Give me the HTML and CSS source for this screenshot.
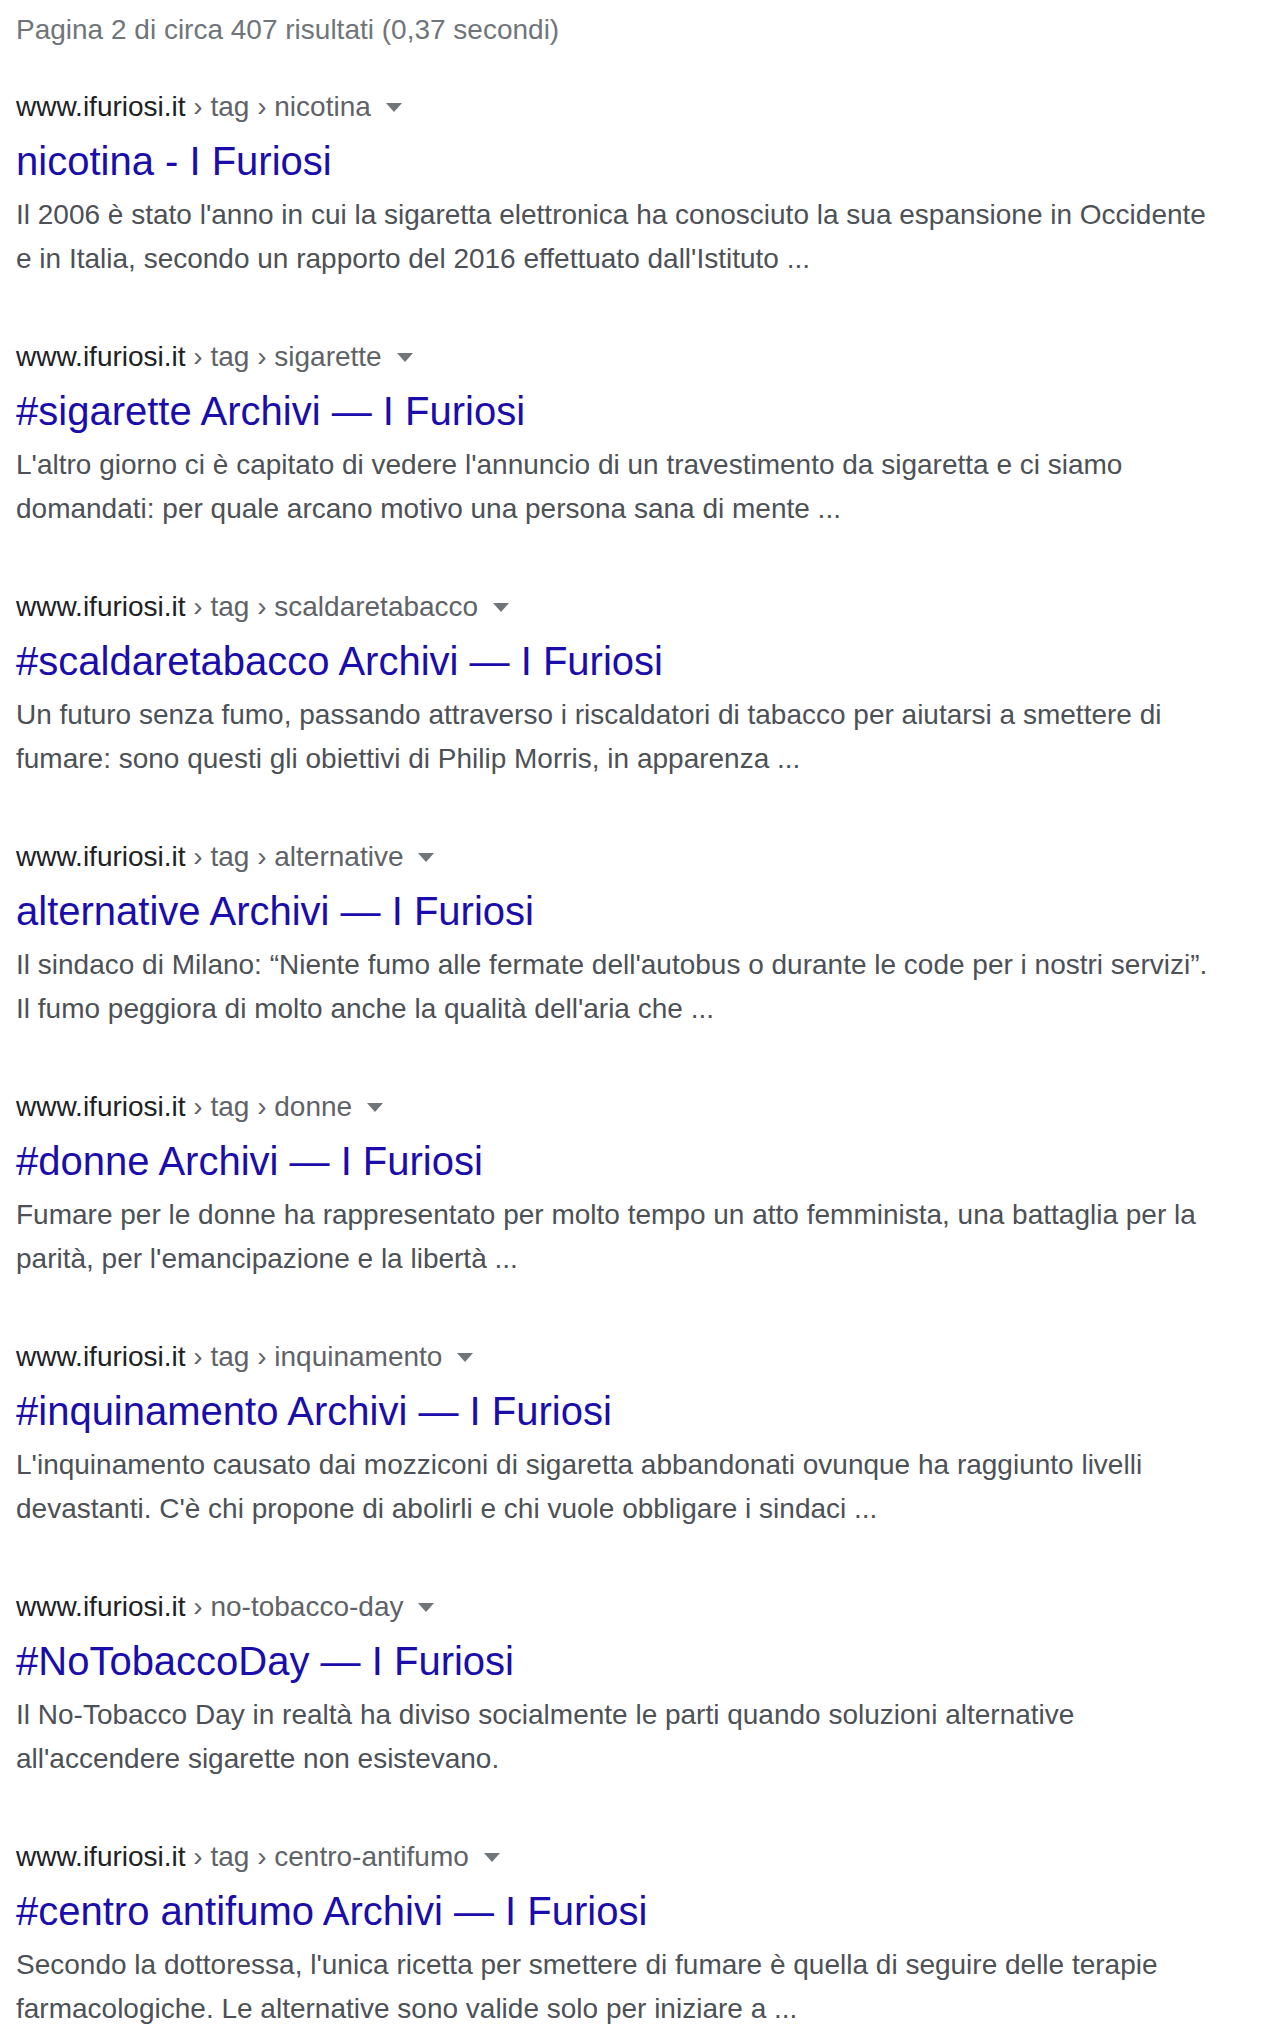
FILE: index.html
```html
<!DOCTYPE html>
<html lang="it">
<head>
<meta charset="utf-8">
<title>Risultati</title>
<link rel="stylesheet" href="styles.css">
</head>
<body>
<div class="page">
  <div class="stats">Pagina 2 di circa 407 risultati (0,37 secondi)</div>

  <div class="result">
    <div class="url"><span class="host">www.ifuriosi.it</span><span class="crumbs"> › tag › nicotina</span><span class="arrow"></span></div>
    <a class="title" href="#">nicotina - I Furiosi</a>
    <div class="snippet">Il 2006 è stato l'anno in cui la sigaretta elettronica ha conosciuto la sua espansione in Occidente e in Italia, secondo un rapporto del 2016 effettuato dall'Istituto ...</div>
  </div>

  <div class="result">
    <div class="url"><span class="host">www.ifuriosi.it</span><span class="crumbs"> › tag › sigarette</span><span class="arrow"></span></div>
    <a class="title" href="#">#sigarette Archivi — I Furiosi</a>
    <div class="snippet">L'altro giorno ci è capitato di vedere l'annuncio di un travestimento da sigaretta e ci siamo domandati: per quale arcano motivo una persona sana di mente ...</div>
  </div>

  <div class="result">
    <div class="url"><span class="host">www.ifuriosi.it</span><span class="crumbs"> › tag › scaldaretabacco</span><span class="arrow"></span></div>
    <a class="title" href="#">#scaldaretabacco Archivi — I Furiosi</a>
    <div class="snippet">Un futuro senza fumo, passando attraverso i riscaldatori di tabacco per aiutarsi a smettere di fumare: sono questi gli obiettivi di Philip Morris, in apparenza ...</div>
  </div>

  <div class="result">
    <div class="url"><span class="host">www.ifuriosi.it</span><span class="crumbs"> › tag › alternative</span><span class="arrow"></span></div>
    <a class="title" href="#">alternative Archivi — I Furiosi</a>
    <div class="snippet">Il sindaco di Milano: “Niente fumo alle fermate dell'autobus o durante le code per i nostri servizi”. Il fumo peggiora di molto anche la qualità dell'aria che ...</div>
  </div>

  <div class="result">
    <div class="url"><span class="host">www.ifuriosi.it</span><span class="crumbs"> › tag › donne</span><span class="arrow"></span></div>
    <a class="title" href="#">#donne Archivi — I Furiosi</a>
    <div class="snippet">Fumare per le donne ha rappresentato per molto tempo un atto femminista, una battaglia per la parità, per l'emancipazione e la libertà ...</div>
  </div>

  <div class="result">
    <div class="url"><span class="host">www.ifuriosi.it</span><span class="crumbs"> › tag › inquinamento</span><span class="arrow"></span></div>
    <a class="title" href="#">#inquinamento Archivi — I Furiosi</a>
    <div class="snippet">L'inquinamento causato dai mozziconi di sigaretta abbandonati ovunque ha raggiunto livelli devastanti. C'è chi propone di abolirli e chi vuole obbligare i sindaci ...</div>
  </div>

  <div class="result">
    <div class="url"><span class="host">www.ifuriosi.it</span><span class="crumbs"> › no-tobacco-day</span><span class="arrow"></span></div>
    <a class="title" href="#">#NoTobaccoDay — I Furiosi</a>
    <div class="snippet">Il No-Tobacco Day in realtà ha diviso socialmente le parti quando soluzioni alternative all'accendere sigarette non esistevano.</div>
  </div>

  <div class="result">
    <div class="url"><span class="host">www.ifuriosi.it</span><span class="crumbs"> › tag › centro-antifumo</span><span class="arrow"></span></div>
    <a class="title" href="#">#centro antifumo Archivi — I Furiosi</a>
    <div class="snippet">Secondo la dottoressa, l'unica ricetta per smettere di fumare è quella di seguire delle terapie farmacologiche. Le alternative sono valide solo per iniziare a ...</div>
  </div>
</div>
</body>
</html>
```

FILE: styles.css
```css
html, body {
  margin: 0;
  padding: 0;
  background: #ffffff;
}

body {
  font-family: "Liberation Sans", Arial, Helvetica, sans-serif;
  -webkit-font-smoothing: antialiased;
}

.page {
  padding: 8px 0 0 16px;
  width: 1200px;
}

.stats {
  font-size: 28px;
  line-height: 44px;
  color: #70757a;
  margin-bottom: 37px;
}

.result {
  margin-bottom: 58px;
}

.url {
  display: flex;
  align-items: center;
  font-size: 28px;
  line-height: 36px;
  white-space: nowrap;
}

.host {
  color: #202124;
}

.crumbs {
  color: #5f6368;
  white-space: pre;
}

.arrow {
  width: 0;
  height: 0;
  margin-left: 15px;
  margin-top: 1px;
  border-left: 8px solid transparent;
  border-right: 8px solid transparent;
  border-top: 9px solid #70757a;
}

.title {
  display: block;
  padding-top: 10px;
  margin-bottom: 6px;
  font-size: 40px;
  line-height: 52px;
  color: #1a0dab;
  text-decoration: none;
}

.snippet {
  font-size: 28px;
  line-height: 44px;
  color: #4d5156;
}
```
